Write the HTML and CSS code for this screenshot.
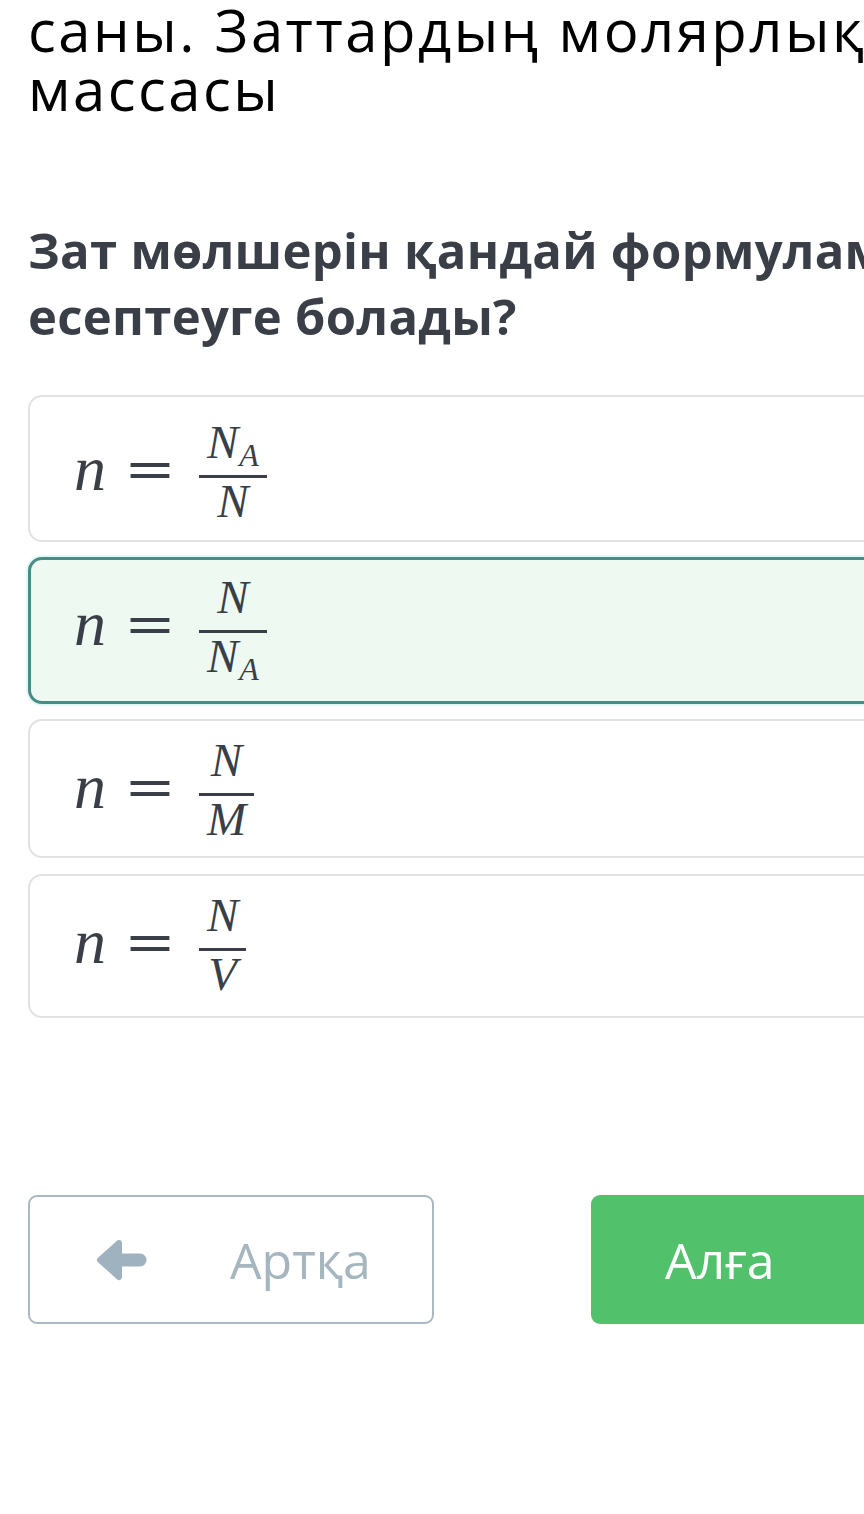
FILE: index.html
```html
<!DOCTYPE html>
<html lang="kk">
<head>
<meta charset="utf-8">
<title>Зат мөлшері</title>
<link rel="stylesheet" href="styles.css">
</head>
<body>
<main class="page">
  <h1 class="topic">саны. Заттардың молярлық массасы</h1>
  <h2 class="question">Зат мөлшерін қандай формуламен есептеуге болады?</h2>

  <div class="answers">
    <div class="answer answer--tall answer--low">
      <span class="math"><span class="var">n</span><span class="eq">=</span><span class="frac"><span class="num"><span class="var">N</span><sub class="sub">A</sub></span><span class="bar"></span><span class="den"><span class="var">N</span></span></span></span>
    </div>
    <div class="answer answer--tall answer--selected">
      <span class="math"><span class="var">n</span><span class="eq">=</span><span class="frac"><span class="num"><span class="var">N</span></span><span class="bar"></span><span class="den"><span class="var">N</span><sub class="sub">A</sub></span></span></span>
    </div>
    <div class="answer answer--short">
      <span class="math"><span class="var">n</span><span class="eq">=</span><span class="frac"><span class="num"><span class="var">N</span></span><span class="bar"></span><span class="den"><span class="var">M</span></span></span></span>
    </div>
    <div class="answer answer--mid">
      <span class="math"><span class="var">n</span><span class="eq">=</span><span class="frac"><span class="num"><span class="var">N</span></span><span class="bar"></span><span class="den"><span class="var">V</span></span></span></span>
    </div>
  </div>

  <nav class="nav">
    <button class="btn btn--back" type="button">
      <svg class="arrow" width="52" height="44" viewBox="0 0 52 44" aria-hidden="true">
        <path d="M24 5 L5 22 L24 39 Z" fill="#9fb2bf" stroke="#9fb2bf" stroke-width="6" stroke-linejoin="round"/>
        <line x1="20" y1="22" x2="45" y2="22" stroke="#9fb2bf" stroke-width="13" stroke-linecap="round"/>
      </svg>
      <span class="btn-label">Артқа</span>
    </button>
    <button class="btn btn--next" type="button">
      <span class="btn-label">Алға</span>
    </button>
  </nav>
</main>
</body>
</html>
```

FILE: styles.css
```css
html, body {
  margin: 0;
  padding: 0;
  background: #ffffff;
  overflow: hidden;
}

.page {
  width: 1100px;
  padding: 0 0 0 28px;
  font-family: "Open Sans", "Noto Sans", sans-serif;
}

.topic {
  margin: 0;
  font-size: 58px;
  line-height: 59px;
  letter-spacing: 2.5px;
  font-weight: 400;
  color: #000000;
  width: 900px;
}

.question {
  margin: 99px 0 0 0;
  font-size: 49px;
  line-height: 66px;
  letter-spacing: 0.3px;
  font-weight: 700;
  color: #3a3f47;
  width: 1000px;
}

.answers {
  margin-top: 46px;
  display: flex;
  flex-direction: column;
  gap: 15px;
}

.answer {
  box-sizing: border-box;
  display: flex;
  align-items: flex-start;
  padding: 16px 0 0 44px;
  border: 2px solid #e1e2e3;
  border-radius: 14px;
  background: #ffffff;
  width: 960px;
}

.answer--tall { height: 147px; }
.answer--short { height: 139px; }
.answer--mid { height: 144px; margin-top: 1px; }
.answer--low { padding-top: 22px; }

.answer--selected {
  border: 3px solid #4a8c85;
  background: #edf9f1;
  box-shadow: 0 0 0 2px #e3f8f6;
  padding: 14px 0 0 43px;
}

.math {
  font-family: "Liberation Serif", "DejaVu Serif", serif;
  font-size: 64px;
  color: #3a3f47;
  line-height: 1;
  white-space: nowrap;
}

.var {
  font-style: italic;
}

.eq {
  font-family: "DejaVu Serif", serif;
  font-size: 62px;
  margin: 0 23px 0 18px;
  display: inline-block;
  transform: scaleY(0.85);
}

.frac {
  display: inline-flex;
  flex-direction: column;
  align-items: center;
  vertical-align: 32px;
  font-size: 47px;
}

.num, .den {
  display: block;
  line-height: 47px;
  padding: 0 8px;
}

.num { padding-bottom: 9px; }

.bar {
  display: block;
  align-self: stretch;
  height: 3px;
  background: #3a3f47;
}

.sub {
  font-family: "Liberation Serif", serif;
  font-style: italic;
  font-size: 32px;
  vertical-align: -8px;
  line-height: 0;
  margin-left: 1px;
}

.nav {
  margin-top: 177px;
  display: flex;
  gap: 157px;
  align-items: flex-start;
}

.btn {
  box-sizing: border-box;
  width: 406px;
  height: 129px;
  border-radius: 9px;
  display: flex;
  align-items: center;
  font-family: "Open Sans", sans-serif;
  font-size: 50px;
  cursor: pointer;
}

.btn--back {
  border: 2px solid #a9b9c1;
  background: #ffffff;
  color: #a5b6bf;
  padding-left: 65px;
}

.btn--back .btn-label {
  margin-left: 83px;
}

.btn--next {
  border: 0;
  background: #52c16b;
  color: #ffffff;
  padding-left: 74px;
}

.arrow {
  display: block;
  flex: none;
}
```
